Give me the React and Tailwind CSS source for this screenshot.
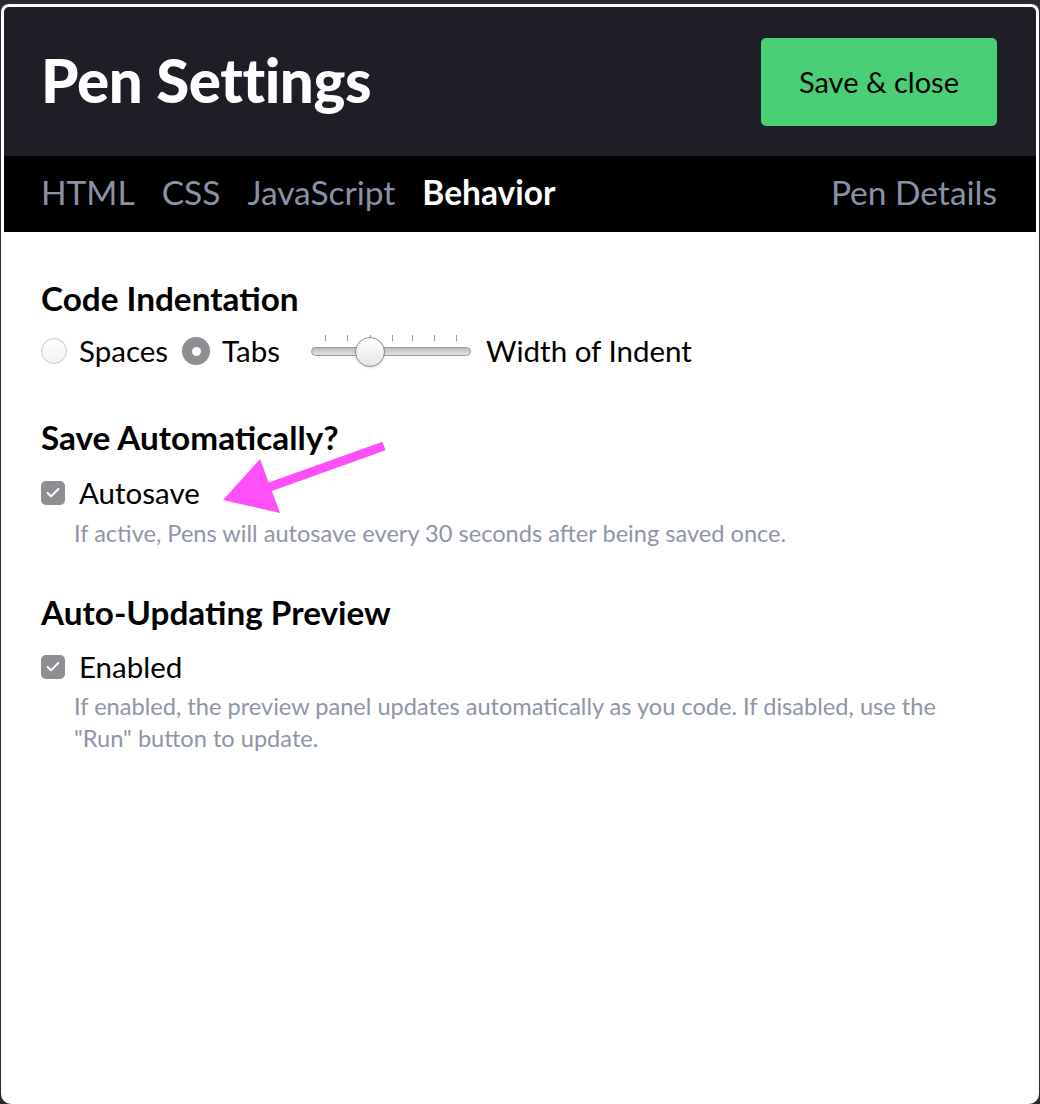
import { Check } from 'lucide-react';

const TABS = [
    { label: 'HTML', active: false },
    { label: 'CSS', active: false },
    { label: 'JavaScript', active: false },
    { label: 'Behavior', active: true }
];

const TICKS = [326, 348, 371, 393, 413, 435, 457];

function Checkbox() {
    return (
        <span className="w-6 h-6 rounded-[5px] bg-[#8e8e93] flex items-center justify-center shrink-0">
            <Check className="w-4 h-4 text-white" strokeWidth={3} />
        </span>
    );
}

function Slider() {
    return (
        <div className="relative w-[160px] h-[40px] shrink-0">
            <div className="absolute left-0 right-0 top-[4px] h-[6px]">
                {TICKS.map((x) => (
                    <span
                        key={x}
                        className="absolute top-0 w-px h-[6px] bg-[#9a9a9a]"
                        style={{ left: x - 312 }}
                    />
                ))}
            </div>
            <div className="absolute left-0 right-0 top-[16px] h-[9px] rounded-full border border-[#9a9a9a] bg-gradient-to-b from-[#bdbdbd] to-[#e2e2e2]" />
            <div className="absolute left-[44px] top-[6px] w-[30px] h-[30px] rounded-full border border-[#8a8a8a] bg-gradient-to-b from-white to-[#e6e6e6] shadow-sm" />
        </div>
    );
}

export default function App() {
    return (
        <div className="w-[1040px] h-[1104px] bg-[#2a2b2f] pt-[4px] px-[1px] font-['Lato','Open_Sans',sans-serif]">
            <div className="relative h-full bg-white border-[3px] border-b-0 border-white rounded-t-[8px] rounded-b-[10px] overflow-hidden">
                <div className="bg-[#1e1f26] h-[149px] flex items-center justify-between pl-[37px] pr-[39px]">
                    <h1 className="text-white font-black text-[60px] tracking-[-0.4px] leading-none mt-[-4px]">
                        Pen Settings
                    </h1>
                    <button
                        type="button"
                        className="w-[236px] h-[88px] rounded-[5px] bg-[#4acf76] text-black text-[29px]"
                    >
                        Save &amp; close
                    </button>
                </div>
                <nav className="bg-black h-[76px] flex items-center justify-between pl-[37px] pr-[39px] pb-[4px]">
                    <div className="flex items-center gap-[27px]">
                        {TABS.map(({ label, active }) => (
                            <span
                                key={label}
                                className={`text-[33.5px] ${active ? 'text-white font-bold' : 'text-[#8b91a6]'}`}
                            >
                                {label}
                            </span>
                        ))}
                    </div>
                    <span className="text-[33.5px] text-[#8b91a6]">Pen Details</span>
                </nav>

                <div className="px-[37px] pt-[48px] text-black">
                    <section>
                        <h2 className="text-[33.3px] font-bold leading-[36px]">Code Indentation</h2>
                        <div className="flex items-center mt-[15px] h-[40px]">
                            <span className="w-[26px] h-[26px] rounded-full border border-[#c8c8c8] bg-gradient-to-b from-white to-[#f2f2f2]" />
                            <span className="text-[29.5px] ml-[12px]">Spaces</span>
                            <span className="w-[28px] h-[28px] rounded-full bg-[#8e8e93] flex items-center justify-center ml-[14px]">
                                <span className="w-[9px] h-[9px] rounded-full bg-white" />
                            </span>
                            <span className="text-[29.5px] ml-[12px]">Tabs</span>
                            <span className="ml-[31px] flex items-center">
                                <Slider />
                            </span>
                            <span className="text-[29.5px] ml-[15px]">Width of Indent</span>
                        </div>
                    </section>

                    <section className="mt-[48px]">
                        <h2 className="text-[33.3px] font-bold leading-[36px]">Save Automatically?</h2>
                        <label className="flex items-center mt-[18px] h-[40px]">
                            <Checkbox />
                            <span className="text-[29.5px] ml-[14px]">Autosave</span>
                        </label>
                        <p className="text-[23.6px] text-[#8e95a6] ml-[33px] mt-[4px] leading-[32px]">
                            If active, Pens will autosave every 30 seconds after being saved once.
                        </p>
                    </section>

                    <section className="mt-[45px]">
                        <h2 className="text-[33.3px] font-bold leading-[36px]">Auto-Updating Preview</h2>
                        <label className="flex items-center mt-[17px] h-[40px]">
                            <Checkbox />
                            <span className="text-[29.5px] ml-[14px]">Enabled</span>
                        </label>
                        <p className="text-[23.6px] text-[#8e95a6] ml-[33px] mt-[3px] leading-[32px] max-w-[880px]">
                            If enabled, the preview panel updates automatically as you code. If disabled, use the "Run" button to update.
                        </p>
                    </section>
                </div>

                <svg
                    className="absolute left-0 top-0 pointer-events-none"
                    width="1040"
                    height="600"
                    viewBox="0 0 1040 600"
                >
                    <line x1="380" y1="439" x2="260" y2="482" stroke="#ff4ff8" strokeWidth="9" strokeLinecap="butt" />
                    <polygon points="219,493 256,452 276,506" fill="#ff4ff8" />
                </svg>
            </div>
        </div>
    );
}
